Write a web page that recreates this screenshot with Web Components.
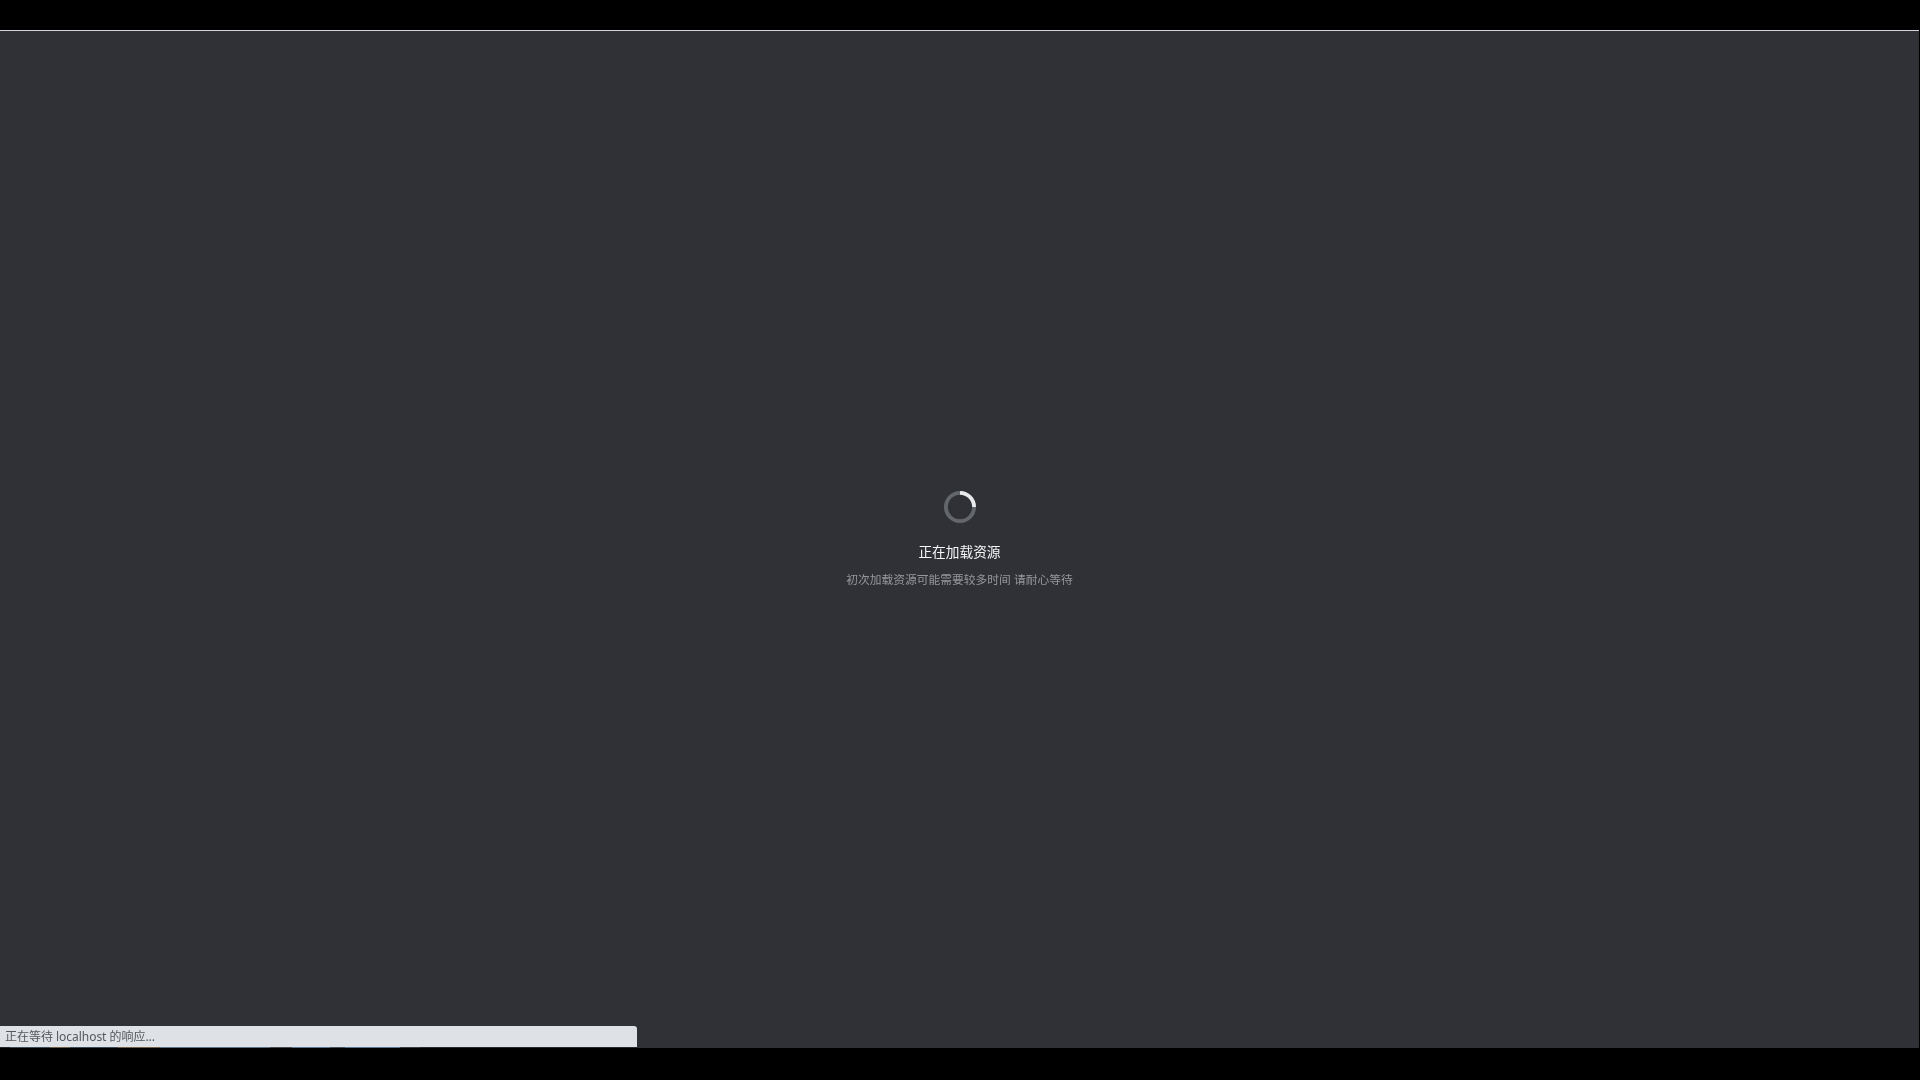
<!DOCTYPE html>
<html lang="zh">
<head>
<meta charset="utf-8">
<title>正在加载资源</title>
<style>
  html, body { margin: 0; height: 100%; background: #000; overflow: hidden; }
</style>
</head>
<body>
<browser-frame>
  <load-screen title-text="正在加载资源" hint="初次加载资源可能需要较多时间 请耐心等待"></load-screen>
  <status-bubble slot="status">正在等待 localhost 的响应...</status-bubble>
</browser-frame>

<script>
class BrowserFrame extends HTMLElement {
  constructor() {
    super();
    this.attachShadow({ mode: 'open' });
    this.shadowRoot.innerHTML = `
      <style>
        :host { display: flex; flex-direction: column; width: 1920px; height: 1080px; background: #000; }
        .top { height: 30px; flex: none; }
        .line { height: 1px; flex: none; margin-right: 1px; background: #d4d5d7; }
        .page { flex: 1; position: relative; display: flex; margin-right: 1px; background: #303136; }
        /* page content peeking out under the status bubble */
        .strip { position: absolute; left: 0; bottom: 0; height: 1px; width: 637px;
          background: linear-gradient(90deg, #23272c 0 10px, #3d4a55 10px 50px, #6b5d4a 50px 70px, #3d4a55 70px 118px, #6e6048 118px 160px, #5a7085 160px 270px, #474b50 270px 292px, #5a7590 292px 330px, #474f58 330px 345px, #5a7590 345px 400px, #3a3e43 400px 420px, #2a2a2c 420px 637px); }
        .bottom { height: 32px; flex: none; }
        ::slotted([slot="status"]) { position: absolute; left: 0; bottom: 1px; }
      </style>
      <div class="top"></div>
      <div class="line"></div>
      <div class="page"><slot></slot><div class="strip"></div><slot name="status"></slot></div>
      <div class="bottom"></div>
    `;
  }
}

class SpinRing extends HTMLElement {
  constructor() {
    super();
    this.attachShadow({ mode: 'open' });
    this.shadowRoot.innerHTML = `
      <style>
        :host { display: block; width: 32px; height: 32px; }
        svg { display: block; }
      </style>
      <svg width="32" height="32" viewBox="0 0 32 32" fill="none" stroke-width="3.8">
        <circle cx="16" cy="16" r="14.1" stroke="#63676b"/>
        <path d="M16 1.9A14.1 14.1 0 0 1 30.1 16" stroke="#e9eaeb"/>
      </svg>
    `;
  }
}

class LoadScreen extends HTMLElement {
  constructor() {
    super();
    this.attachShadow({ mode: 'open' });
    this.shadowRoot.innerHTML = `
      <style>
        :host { flex: 1; display: flex; flex-direction: column; align-items: center; padding-top: 460px;
          font-family: "Liberation Sans", "Noto Sans CJK SC", sans-serif; }
        h1 { margin: 19px 0 0; font-size: 13.7px; line-height: 22px; font-weight: 400; color: #f6f6f7; filter: blur(0.3px); }
        p { margin: 4.5px 0 0; font-size: 11.75px; line-height: 22px; color: #96979a; white-space: pre; filter: blur(0.3px); }
      </style>
      <spin-ring></spin-ring>
      <h1></h1>
      <p></p>
    `;
    this.shadowRoot.querySelector('h1').textContent = this.getAttribute('title-text');
    this.shadowRoot.querySelector('p').textContent = this.getAttribute('hint');
  }
}

class StatusBubble extends HTMLElement {
  constructor() {
    super();
    this.attachShadow({ mode: 'open' });
    this.shadowRoot.innerHTML = `
      <style>
        :host { display: block; box-sizing: border-box; width: 637px; height: 21px; padding: 0 5px;
          background: #dee1e6; border-top-right-radius: 3px; color: #55575b;
          font: 12px/22px "Noto Sans", "Noto Sans CJK SC", sans-serif; letter-spacing: -0.03px; }
        span { filter: blur(0.25px); display: inline-block; }
      </style>
      <span><slot></slot></span>
    `;
  }
}

customElements.define('spin-ring', SpinRing);
customElements.define('load-screen', LoadScreen);
customElements.define('status-bubble', StatusBubble);
customElements.define('browser-frame', BrowserFrame);
</script>
</body>
</html>
